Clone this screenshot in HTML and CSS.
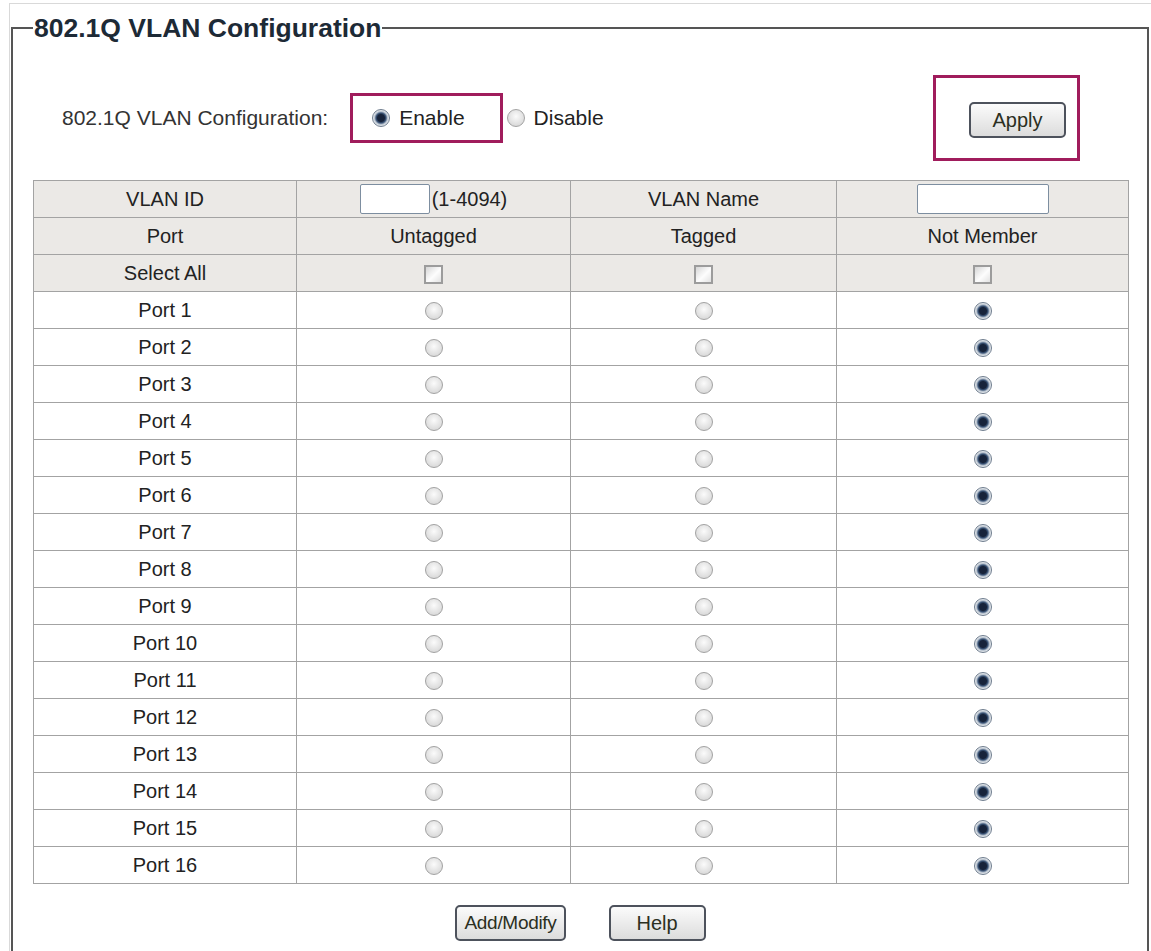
FILE: index.html
```html
<!DOCTYPE html>
<html lang="en">
<head>
    <meta charset="UTF-8">
    <meta name="viewport" content="width=device-width, initial-scale=1.0">
    <title>802.1Q VLAN Configuration</title>
    <link rel="stylesheet" href="styles.css">
</head>
<body>

<div class="page">
    <fieldset class="vlan-box">
        <legend>802.1Q VLAN Configuration</legend>

        <div class="config-row">
            <div class="config-left">
                <span class="config-label">802.1Q VLAN Configuration:</span>
                <label class="option enable-box hl">
                    <input type="radio" name="vlan_mode" checked> Enable
                </label>
                <label class="option disable">
                    <input type="radio" name="vlan_mode"> Disable
                </label>
            </div>
            <div class="apply-box hl">
                <button class="btn">Apply</button>
            </div>
        </div>

        <table class="vlan-table">
            <colgroup>
                <col style="width:263px">
                <col style="width:274px">
                <col style="width:266px">
                <col style="width:292px">
            </colgroup>
            <tr class="head">
                <td>VLAN ID</td>
                <td><input type="text" class="id-input"><span class="range">(1-4094)</span></td>
                <td>VLAN Name</td>
                <td><input type="text" class="name-input"></td>
            </tr>
            <tr class="head">
                <td>Port</td>
                <td>Untagged</td>
                <td>Tagged</td>
                <td>Not Member</td>
            </tr>
            <tr class="head">
                <td>Select All</td>
                <td><input type="checkbox"></td>
                <td><input type="checkbox"></td>
                <td><input type="checkbox"></td>
            </tr>
            <tr><td>Port 1</td><td><input type="radio" name="p1"></td><td><input type="radio" name="p1"></td><td><input type="radio" name="p1" checked></td></tr>
            <tr><td>Port 2</td><td><input type="radio" name="p2"></td><td><input type="radio" name="p2"></td><td><input type="radio" name="p2" checked></td></tr>
            <tr><td>Port 3</td><td><input type="radio" name="p3"></td><td><input type="radio" name="p3"></td><td><input type="radio" name="p3" checked></td></tr>
            <tr><td>Port 4</td><td><input type="radio" name="p4"></td><td><input type="radio" name="p4"></td><td><input type="radio" name="p4" checked></td></tr>
            <tr><td>Port 5</td><td><input type="radio" name="p5"></td><td><input type="radio" name="p5"></td><td><input type="radio" name="p5" checked></td></tr>
            <tr><td>Port 6</td><td><input type="radio" name="p6"></td><td><input type="radio" name="p6"></td><td><input type="radio" name="p6" checked></td></tr>
            <tr><td>Port 7</td><td><input type="radio" name="p7"></td><td><input type="radio" name="p7"></td><td><input type="radio" name="p7" checked></td></tr>
            <tr><td>Port 8</td><td><input type="radio" name="p8"></td><td><input type="radio" name="p8"></td><td><input type="radio" name="p8" checked></td></tr>
            <tr><td>Port 9</td><td><input type="radio" name="p9"></td><td><input type="radio" name="p9"></td><td><input type="radio" name="p9" checked></td></tr>
            <tr><td>Port 10</td><td><input type="radio" name="p10"></td><td><input type="radio" name="p10"></td><td><input type="radio" name="p10" checked></td></tr>
            <tr><td>Port 11</td><td><input type="radio" name="p11"></td><td><input type="radio" name="p11"></td><td><input type="radio" name="p11" checked></td></tr>
            <tr><td>Port 12</td><td><input type="radio" name="p12"></td><td><input type="radio" name="p12"></td><td><input type="radio" name="p12" checked></td></tr>
            <tr><td>Port 13</td><td><input type="radio" name="p13"></td><td><input type="radio" name="p13"></td><td><input type="radio" name="p13" checked></td></tr>
            <tr><td>Port 14</td><td><input type="radio" name="p14"></td><td><input type="radio" name="p14"></td><td><input type="radio" name="p14" checked></td></tr>
            <tr><td>Port 15</td><td><input type="radio" name="p15"></td><td><input type="radio" name="p15"></td><td><input type="radio" name="p15" checked></td></tr>
            <tr><td>Port 16</td><td><input type="radio" name="p16"></td><td><input type="radio" name="p16"></td><td><input type="radio" name="p16" checked></td></tr>
        </table>

        <div class="actions">
            <button class="btn">Add/Modify</button>
            <button class="btn">Help</button>
        </div>
    </fieldset>
</div>

</body>
</html>
```

FILE: styles.css
```css
body {
    margin: 0;
    font-family: "Liberation Sans", Arial, sans-serif;
    color: #222;
    background-color: #fff;
}
.page {
    margin: 3px 0 0 9px;
    border-top: 1px solid #d9d9d9;
    border-left: 1px solid #d9d9d9;
    padding: 9px 0 0 1px;
}
.vlan-box {
    width: 1138px;
    box-sizing: border-box;
    margin: 0;
    border: 2px solid #555;
    padding: 32px 0 40px 0;
}
.vlan-box legend {
    margin-left: 20px;
    padding: 0 1px;
    font-size: 26.5px;
    font-weight: bold;
    line-height: 30px;
    color: #1d2a36;
}
.config-row {
    display: flex;
    align-items: center;
    justify-content: space-between;
    padding: 0 67px 0 49px;
}
.config-left {
    display: flex;
    align-items: center;
}
.config-label {
    font-size: 21px;
    color: #333;
    margin-right: 22px;
}
.hl {
    border: 3px solid #a01c5c;
}
.option {
    display: flex;
    align-items: center;
    font-size: 21px;
    color: #222;
}
.option input[type="radio"] {
    margin: 0 9px 0 0;
}
.enable-box {
    height: 44px;
    padding: 0 35px 0 19px;
}
.disable {
    margin-left: 4px;
}
.apply-box {
    padding: 24px 11px 20px 33px;
}
.vlan-table {
    margin: 19px 0 0 20px;
    width: 1095px;
    border-collapse: collapse;
    table-layout: fixed;
    font-size: 20px;
}
.vlan-table tr {
    height: 37px;
}
.vlan-table td {
    border: 1px solid #a3a3a3;
    padding: 0;
    text-align: center;
    vertical-align: middle;
}
.vlan-table .head td {
    background-color: #ebe9e6;
}
.id-input,
.name-input {
    height: 30px;
    box-sizing: border-box;
    border: 1px solid #7d8ea0;
    border-radius: 2px;
    background: #fff;
    vertical-align: middle;
    margin: 0;
}
.id-input {
    width: 70px;
}
.name-input {
    width: 132px;
}
.range {
    margin-left: 2px;
    vertical-align: middle;
}
input[type="radio"] {
    appearance: none;
    -webkit-appearance: none;
    width: 18px;
    height: 18px;
    box-sizing: border-box;
    border-radius: 50%;
    border: 1px solid #a3a3a3;
    background: radial-gradient(circle at 50% 40%, #fbfbfb, #cfcfcf);
    margin: 0;
    vertical-align: middle;
}
input[type="radio"]:checked {
    border-color: #6f7d8e;
    background: radial-gradient(circle, #17233a 0 3.5px, #3c5679 5px, #b9c3cf 6.5px, #eef1f4 8px);
}
input[type="checkbox"] {
    appearance: none;
    -webkit-appearance: none;
    width: 19px;
    height: 19px;
    box-sizing: border-box;
    border: 2px solid #9c9c9c;
    background: linear-gradient(135deg, #d6d6d6, #fdfdfd 55%, #e2e2e2);
    margin: 0;
    vertical-align: middle;
}
.btn {
    font-family: "Liberation Sans", Arial, sans-serif;
    font-size: 20px;
    color: #2b2f22;
    height: 36px;
    min-width: 97px;
    padding: 0 7px;
    border: 2px solid #4d525c;
    border-radius: 5px;
    background: linear-gradient(#fbfbfb, #dcdcdc);
    cursor: pointer;
}
.actions {
    display: flex;
    justify-content: center;
    gap: 43px;
    width: 1095px;
    margin: 21px 0 0 20px;
}
.actions .btn:first-child {
    font-size: 19px;
    letter-spacing: -0.3px;
}
```
